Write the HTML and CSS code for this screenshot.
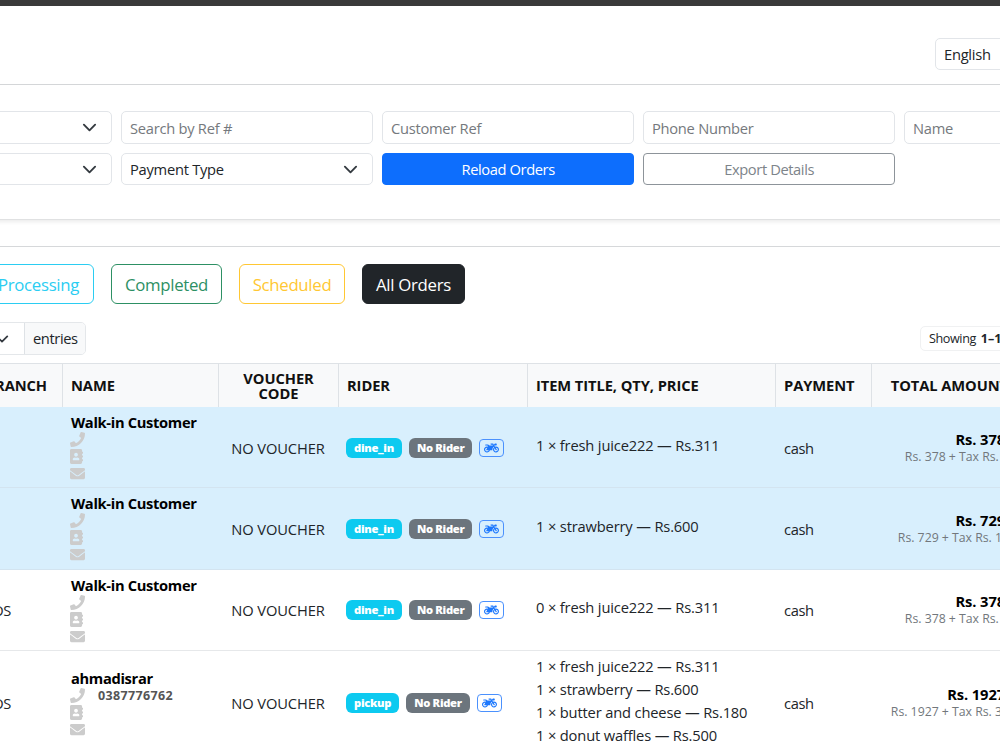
FILE: index.html
```html
<!DOCTYPE html>
<html lang="en">
<head>
  <meta charset="UTF-8">
  <meta name="viewport" content="width=device-width, initial-scale=1.0">
  <title>Orders</title>
  <link rel="stylesheet" href="styles.css">
</head>
<body>

  <!-- Icon shapes -->
  <svg class="icon-defs">
    <symbol id="chevron" viewBox="0 0 16 16">
      <path fill="none" stroke="#343a40" stroke-linecap="round" stroke-linejoin="round" stroke-width="2" d="m2 5 6 6 6-6"/>
    </symbol>
    <symbol id="phone" viewBox="0 0 512 512">
      <path d="M493.4 24.6l-104-24c-11.3-2.6-22.9 3.3-27.5 13.9l-48 112c-4.2 9.8-1.4 21.3 6.9 28l60.6 49.6c-36 76.7-98.9 140.5-177.2 177.2l-49.6-60.6c-6.8-8.3-18.2-11.1-28-6.9l-112 48C3.9 366.5-2 378.1.6 389.4l24 104C27.1 504.2 36.7 512 48 512c256.1 0 464-207.5 464-464 0-11.2-7.7-20.9-18.6-23.4z"/>
    </symbol>
    <symbol id="book" viewBox="0 0 448 512">
      <path d="M436 160c6.6 0 12-5.4 12-12v-40c0-6.6-5.4-12-12-12h-20V48c0-26.5-21.5-48-48-48H48C21.5 0 0 21.5 0 48v416c0 26.5 21.5 48 48 48h320c26.5 0 48-21.5 48-48v-48h20c6.6 0 12-5.4 12-12v-40c0-6.6-5.4-12-12-12h-20v-64h20c6.6 0 12-5.4 12-12v-40c0-6.6-5.4-12-12-12h-20v-64h20zm-228-32c35.3 0 64 28.7 64 64s-28.7 64-64 64-64-28.7-64-64 28.7-64 64-64zm112 236.8c0 10.6-10 19.2-22.4 19.2H118.4C106 384 96 375.4 96 364.8v-19.2c0-31.8 30.1-57.6 67.2-57.6h5c12.3 5.1 25.7 8 39.8 8s27.6-2.9 39.8-8h5c37.1 0 67.2 25.8 67.2 57.6v19.2z"/>
    </symbol>
    <symbol id="mail" viewBox="0 0 512 512">
      <path d="M502.3 190.8c3.9-3.1 9.7-.2 9.7 4.7V400c0 26.5-21.5 48-48 48H48c-26.5 0-48-21.5-48-48V195.6c0-5 5.7-7.8 9.7-4.7 22.4 17.4 52.1 39.5 154.1 113.6 21.1 15.4 56.7 47.8 92.2 47.6 35.7.3 72-32.8 92.3-47.6 102-74.1 131.6-96.3 154-113.7zM256 320c23.2.4 56.6-29.2 73.4-41.4 132.7-96.3 142.8-104.7 173.4-128.7 5.8-4.5 9.2-11.5 9.2-18.9v-19c0-26.5-21.5-48-48-48H48c-26.5 0-48 21.5-48 48v19c0 7.4 3.4 14.3 9.2 18.9 30.6 23.9 40.7 32.4 173.4 128.7 16.8 12.2 50.2 41.8 73.4 41.4z"/>
    </symbol>
    <symbol id="bike" viewBox="0 0 640 512">
      <path d="M512.9 192c-14.9-.1-29.1 2.3-42.4 6.9L437.6 144H520c13.3 0 24-10.7 24-24V88c0-13.3-10.7-24-24-24h-45.3c-6.8 0-13.3 2.9-17.8 7.9l-37.5 41.7-22.8-38C392.2 68.4 384.4 64 376 64h-80c-8.8 0-16 7.2-16 16v16c0 8.8 7.2 16 16 16h66.4l19.2 32H227.9c-17.7-23.1-44.9-40-99.9-40H72.5C59 104 47.7 115 48 128.5c.2 13 10.9 23.5 24 23.5h56c24.5 0 38.7 10.9 47.8 24.8l-11.3 20.5c-13-3.9-26.9-5.7-41.3-5.2C55.9 194.5 1.6 249.6 0 317c-1.6 72.1 56.3 131 128 131 59.6 0 109.7-40.8 124-96h84.2c13.7 0 24.6-11.4 24-25.1-2.1-47.1 17.5-93.7 56.2-125l12.5 20.8c-27.6 23.7-45.1 58.9-44.8 98.2.5 69.6 57.2 126.5 126.8 127.1 71.6.7 129.8-57.5 129.2-129.1-.7-69.6-57.6-126.4-127.2-126.9zM128 400c-44.1 0-80-35.9-80-80s35.9-80 80-80c4.2 0 8.4.3 12.5 1L99 316.4c-8.8 16 2.8 35.6 21 35.6h81.3c-12.4 28.2-40.6 48-73.3 48zm463.9-75.6c-2.2 40.6-35 73.4-75.5 75.5-46.1 2.5-84.4-34.3-84.4-79.9 0-21.4 8.4-40.8 22.1-55.1l49.4 82.4c4.5 7.6 14.4 10 22 5.5l13.7-8.2c7.6-4.5 10-14.4 5.5-22l-48.6-80.9c5.2-1.1 10.5-1.6 15.9-1.6 45.6-.1 82.3 38.2 79.9 84.3z"/>
    </symbol>
  </svg>

  <div class="page">
    <header class="topbar">
      <div class="field language">English</div>
    </header>

    <!-- Filters -->
    <section class="filters">
      <div class="field select"><span></span><svg><use href="#chevron"/></svg></div>
      <div class="field hint">Search by Ref #</div>
      <div class="field hint">Customer Ref</div>
      <div class="field hint">Phone Number</div>
      <div class="field hint">Name</div>
      <div class="field select"><span></span><svg><use href="#chevron"/></svg></div>
      <div class="field select"><span>Payment Type</span><svg><use href="#chevron"/></svg></div>
      <button class="btn btn-reload">Reload Orders</button>
      <button class="btn btn-export">Export Details</button>
    </section>

    <!-- Order tabs -->
    <section class="tabs">
      <button class="tab processing">Processing</button>
      <button class="tab completed">Completed</button>
      <button class="tab scheduled">Scheduled</button>
      <button class="tab all">All Orders</button>
    </section>

    <div class="table-bar">
      <div class="length">
        <div class="length-select"><svg><use href="#chevron"/></svg></div>
        <div class="length-label">entries</div>
      </div>
      <div class="showing">Showing <b>1–10</b></div>
    </div>

    <table class="orders">
      <colgroup>
        <col class="c-branch"><col class="c-name"><col class="c-voucher"><col class="c-rider">
        <col class="c-items"><col class="c-payment"><col class="c-total">
      </colgroup>
      <thead>
        <tr>
          <th class="branch">BRANCH</th>
          <th>NAME</th>
          <th class="voucher">VOUCHER CODE</th>
          <th>RIDER</th>
          <th>ITEM TITLE, QTY, PRICE</th>
          <th>PAYMENT</th>
          <th class="total">TOTAL AMOUNT</th>
        </tr>
      </thead>
      <tbody>
        <tr class="new">
          <td class="branch"></td>
          <td class="name">
            <strong>Walk-in Customer</strong>
            <div class="contact"><svg><use href="#phone"/></svg></div>
            <div class="contact"><svg class="book"><use href="#book"/></svg></div>
            <div class="contact"><svg><use href="#mail"/></svg></div>
          </td>
          <td class="voucher">NO VOUCHER</td>
          <td>
            <div class="rider">
              <span class="badge type">dine_in</span><span class="badge none">No Rider</span>
              <span class="assign"><svg><use href="#bike"/></svg></span>
            </div>
          </td>
          <td class="items"><div>1 × fresh juice222 — Rs.311</div></td>
          <td class="pay">cash</td>
          <td class="total"><strong>Rs. 378</strong><small>Rs. 378 + Tax Rs. 0</small></td>
        </tr>
        <tr class="new">
          <td class="branch"></td>
          <td class="name">
            <strong>Walk-in Customer</strong>
            <div class="contact"><svg><use href="#phone"/></svg></div>
            <div class="contact"><svg class="book"><use href="#book"/></svg></div>
            <div class="contact"><svg><use href="#mail"/></svg></div>
          </td>
          <td class="voucher">NO VOUCHER</td>
          <td>
            <div class="rider">
              <span class="badge type">dine_in</span><span class="badge none">No Rider</span>
              <span class="assign"><svg><use href="#bike"/></svg></span>
            </div>
          </td>
          <td class="items"><div>1 × strawberry — Rs.600</div></td>
          <td class="pay">cash</td>
          <td class="total"><strong>Rs. 729</strong><small>Rs. 729 + Tax Rs. 10</small></td>
        </tr>
        <tr>
          <td class="branch">POS</td>
          <td class="name">
            <strong>Walk-in Customer</strong>
            <div class="contact"><svg><use href="#phone"/></svg></div>
            <div class="contact"><svg class="book"><use href="#book"/></svg></div>
            <div class="contact"><svg><use href="#mail"/></svg></div>
          </td>
          <td class="voucher">NO VOUCHER</td>
          <td>
            <div class="rider">
              <span class="badge type">dine_in</span><span class="badge none">No Rider</span>
              <span class="assign"><svg><use href="#bike"/></svg></span>
            </div>
          </td>
          <td class="items"><div>0 × fresh juice222 — Rs.311</div></td>
          <td class="pay">cash</td>
          <td class="total"><strong>Rs. 378</strong><small>Rs. 378 + Tax Rs. 0</small></td>
        </tr>
        <tr class="tall">
          <td class="branch">POS</td>
          <td class="name">
            <strong>ahmadisrar</strong>
            <div class="contact"><svg><use href="#phone"/></svg><span>0387776762</span></div>
            <div class="contact"><svg class="book"><use href="#book"/></svg></div>
            <div class="contact"><svg><use href="#mail"/></svg></div>
          </td>
          <td class="voucher">NO VOUCHER</td>
          <td>
            <div class="rider">
              <span class="badge type">pickup</span><span class="badge none">No Rider</span>
              <span class="assign"><svg><use href="#bike"/></svg></span>
            </div>
          </td>
          <td class="items">
            <div>1 × fresh juice222 — Rs.311</div>
            <div>1 × strawberry — Rs.600</div>
            <div>1 × butter and cheese — Rs.180</div>
            <div>1 × donut waffles — Rs.500</div>
          </td>
          <td class="pay">cash</td>
          <td class="total"><strong>Rs. 1927</strong><small>Rs. 1927 + Tax Rs. 30</small></td>
        </tr>
      </tbody>
    </table>
  </div>

</body>
</html>
```
FILE: styles.css
```css
/* Reset and basic styles */
* {
  margin: 0;
  padding: 0;
  box-sizing: border-box;
}

body {
  height: 750px;
  overflow: hidden;
  background: #fff;
  color: #212529;
  font-family: "Segoe UI", "Open Sans", "Noto Sans", sans-serif;
  font-size: 14.7px;
  letter-spacing: -0.4px;
}

button {
  font: inherit;
  letter-spacing: inherit;
}

.icon-defs {
  display: none;
}

/* The page is wider than the window and scrolled sideways */
.page {
  width: 1257px;
  margin-left: -140px;
}

.topbar {
  height: 85px;
  display: flex;
  justify-content: flex-end;
  align-items: flex-start;
  padding: 32px 62px 0 0;
  border-top: 6px solid #3a3a3a;
  border-bottom: 1px solid #d6d8da;
}

/* Form fields */
.field {
  display: flex;
  align-items: center;
  padding: 0 8px;
  border: 1px solid #e2e5e9;
  border-radius: 5px;
  letter-spacing: -0.26px;
  white-space: nowrap;
}

.language {
  width: 120px;
  height: 32px;
}

.hint {
  color: #75797d;
}

.select {
  justify-content: space-between;
  padding-right: 14px;
}

.select svg {
  width: 15px;
  height: 15px;
}

/* Filters */
.filters {
  height: 135px;
  display: grid;
  grid-template-columns: repeat(5, 252.4px);
  grid-template-rows: 33px 32px;
  gap: 9px 8.6px;
  padding-top: 26px;
  border-bottom: 1px solid #e0e1e2;
  box-shadow: 0 2px 4px rgba(0, 0, 0, 0.08);
}

.btn {
  border: 1px solid #0d6efd;
  border-radius: 4px;
}

.btn-reload {
  background: #0d6efd;
  color: #fff;
}

.btn-export {
  background: #fff;
  border-color: #8d949a;
  color: #7d848a;
}

/* Order tabs */
.tabs {
  display: flex;
  gap: 17px;
  margin-top: 26px;
  padding: 17px 0 0 123px;
  border-top: 1px solid #d6d8da;
}

.tab {
  height: 40px;
  border: 1px solid;
  border-radius: 6px;
  background: #fff;
  font-size: 16.8px;
  letter-spacing: -0.3px;
}

.processing {
  width: 111px;
  color: #2bcdf2;
}

.completed {
  width: 111px;
  color: #2d9064;
}

.scheduled {
  width: 106px;
  color: #ffc733;
}

.all {
  width: 103px;
  background: #212529;
  border-color: #212529;
  color: #fff;
}

/* Bar over the table */
.table-bar {
  display: flex;
  justify-content: space-between;
  align-items: center;
  height: 33px;
  margin: 18px 61px 0 64px;
}

.length {
  display: flex;
  height: 33px;
  border: 1px solid #e4e7ea;
  border-radius: 5px;
  overflow: hidden;
}

.length-select {
  width: 99px;
  display: flex;
  align-items: center;
  justify-content: flex-end;
  padding-right: 15px;
}

.length-select svg {
  width: 14px;
  height: 14px;
}

.length-label {
  display: flex;
  align-items: center;
  width: 61px;
  padding: 0 0 2px 8px;
  border-left: 1px solid #dee2e6;
  background: #f8f9fa;
}

.showing {
  width: 136px;
  height: 25px;
  padding: 3px 8px;
  border: 1px solid #f0f1f2;
  border-radius: 5px;
  font-size: 12.6px;
  white-space: nowrap;
}

.showing b {
  margin-left: 2px;
  letter-spacing: 0;
}

/* Orders table */
.orders {
  width: 1257px;
  margin-top: 8px;
  table-layout: fixed;
  border-collapse: separate;
  border-spacing: 0;
}

.c-branch { width: 202px; }
.c-name { width: 156px; }
.c-voucher { width: 120px; }
.c-rider { width: 189px; }
.c-items { width: 248px; }
.c-payment { width: 96px; }

th {
  height: 44px;
  padding: 0 8px;
  background: #f8f9fa;
  border-top: 1px solid #dee2e6;
  border-left: 1px solid #dee2e6;
  color: #111;
  letter-spacing: -0.08px;
  line-height: 15px;
  text-align: left;
}

td {
  height: 81.3px;
  padding: 1px 8px 0;
  border-bottom: 1px solid #e6e8ea;
}

.new td {
  background: #d8effd;
  border-bottom-color: #d3e4f0;
}

.tall td {
  height: 105px;
}

.branch {
  padding-right: 15px;
  text-align: right;
}

td.branch {
  padding-right: 51px;
}

.voucher {
  text-align: center;
}

td.voucher {
  letter-spacing: -0.1px;
}

.name strong {
  display: block;
  margin-left: 1px;
  color: #000;
  letter-spacing: -0.33px;
  line-height: 18px;
}

.contact {
  display: flex;
  align-items: center;
  height: 17px;
}

.contact svg {
  width: 15px;
  height: 15px;
  fill: #ccc;
}

.contact .book {
  width: 13px;
}

.contact span {
  margin-left: 13px;
  color: #555;
  font-size: 12.5px;
  font-weight: 700;
  letter-spacing: 0.35px;
}

/* Rider badges */
.rider {
  display: flex;
  align-items: center;
}

.badge {
  height: 20px;
  margin-right: 7px;
  padding: 0 8px;
  border-radius: 6px;
  color: #fff;
  font-size: 11.2px;
  font-weight: 800;
  letter-spacing: -0.3px;
  line-height: 20px;
}

.type {
  background: #0dcaf0;
}

.none {
  background: #6c757d;
}

.assign {
  display: flex;
  align-items: center;
  justify-content: center;
  width: 25px;
  height: 18px;
  border: 1px solid #4b91fd;
  border-radius: 4px;
}

.assign svg {
  width: 15px;
  height: 12px;
  fill: #1d78fd;
}

.items {
  padding: 0 0 4px 9px;
  letter-spacing: -0.16px;
}

.items div {
  line-height: 23.1px;
}

.pay {
  padding-left: 9px;
}

.total {
  padding-right: 109px;
  text-align: right;
  white-space: nowrap;
}

td.total {
  padding-right: 108px;
}

.total strong {
  display: block;
  margin-right: 4px;
  color: #000;
  letter-spacing: -0.1px;
  line-height: 17px;
}

.total small {
  display: block;
  color: #72777c;
  font-size: 12.3px;
  letter-spacing: -0.02px;
  line-height: 17px;
}
```
